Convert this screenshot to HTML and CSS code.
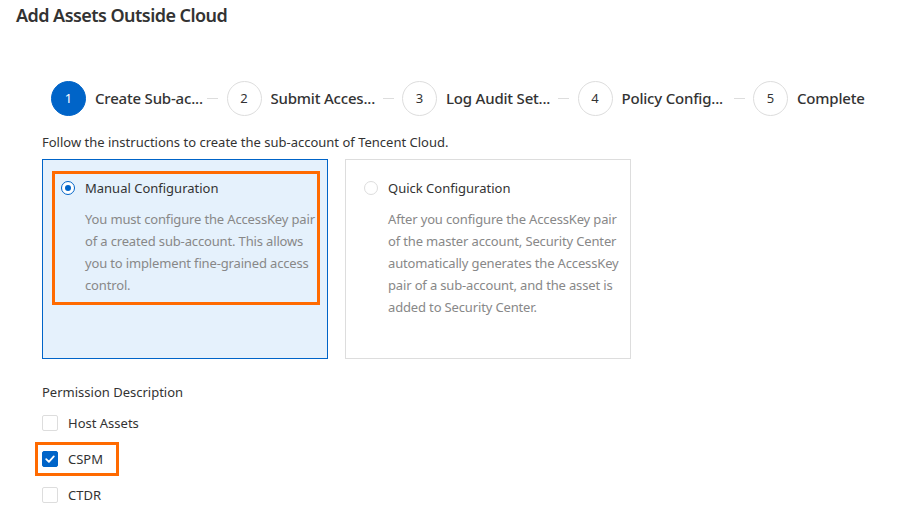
FILE: index.html
```html
<!DOCTYPE html>
<html>
<head>
<meta charset="utf-8">
<link rel="stylesheet" href="styles.css">
</head>
<body>
<div class="page">
  <h1 class="title">Add Assets Outside Cloud</h1>
  <div class="steps">
    <div class="step active"><span class="num">1</span><span class="label">Create Sub-ac...</span><span class="sep"></span></div>
    <div class="step"><span class="num">2</span><span class="label">Submit Acces...</span><span class="sep"></span></div>
    <div class="step"><span class="num">3</span><span class="label">Log Audit Set...</span><span class="sep"></span></div>
    <div class="step"><span class="num">4</span><span class="label">Policy Config...</span><span class="sep"></span></div>
    <div class="step last"><span class="num">5</span><span class="label">Complete</span></div>
  </div>
  <p class="intro">Follow the instructions to create the sub-account of Tencent Cloud.</p>
  <div class="cards">
    <div class="card selected">
      <div class="highlight">
        <div class="opt-head"><span class="radio on"></span><span class="opt-title">Manual Configuration</span></div>
        <p class="opt-desc">You must configure the AccessKey pair of a created sub-account. This allows you to implement fine-grained access control.</p>
      </div>
    </div>
    <div class="card">
      <div class="plain">
        <div class="opt-head"><span class="radio"></span><span class="opt-title">Quick Configuration</span></div>
        <p class="opt-desc">After you configure the AccessKey pair of the master account, Security Center automatically generates the AccessKey pair of a sub-account, and the asset is added to Security Center.</p>
      </div>
    </div>
  </div>
  <div class="perm-title">Permission Description</div>
  <div class="checks">
    <div class="check"><span class="box"></span><span>Host Assets</span></div>
    <div class="check marked"><span class="box on"><svg width="12" height="12" viewBox="0 0 12 12"><path d="M2.2 6.2 L4.9 8.8 L9.8 3.4" fill="none" stroke="#fff" stroke-width="1.8" stroke-linecap="round" stroke-linejoin="round"/></svg></span><span>CSPM</span></div>
    <div class="check"><span class="box"></span><span>CTDR</span></div>
  </div>
</div>
</body>
</html>
```
FILE: styles.css
```css
html, body { margin: 0; padding: 0; background: #fff; }
body { font-family: "Noto Sans", "Open Sans", sans-serif; color: #333; width: 900px; height: 513px; overflow: hidden; }
.page { padding: 3px 0 0 16px; }
.title { margin: 0; font-size: 18px; font-weight: 600; line-height: 24px; color: #333; letter-spacing: -0.55px; }
.steps { display: flex; align-items: center; margin-top: 53px; margin-left: 35px; height: 36px; }
.step { display: flex; align-items: center; flex: 0 0 175.5px; }
.step.last { flex: 0 0 auto; }
.num { width: 33px; height: 33px; border: 1px solid #ddd; border-radius: 50%; display: flex; align-items: center; justify-content: center; font-size: 13px; color: #333; box-sizing: content-box; flex: none; margin-right: 9px; }
.step.active .num { background: #0064c8; border-color: #0064c8; color: #fff; }
.label { font-size: 15px; font-weight: 500; color: #333; letter-spacing: -0.2px; flex: 0 0 112px; white-space: nowrap; overflow: hidden; }
.step.last .label { flex: 0 0 auto; }
.sep { width: 11px; height: 1px; background: #ddd; flex: none; }
.intro { margin: 16px 0 0 26px; font-size: 13px; line-height: 20px; color: #333; }
.cards { display: flex; gap: 17px; margin: 7px 0 0 26px; }
.card { width: 284px; height: 198px; border: 1px solid #ddd; background: #fff; box-sizing: content-box; }
.card.selected { border-color: #0064c8; background: #e5f1fc; }
.highlight { margin: 11px 7px 0 9px; border: 3px solid #ff6a00; padding: 4px 0 6px 6px; }
.plain { margin: 11px 7px 0 9px; border: 3px solid transparent; padding: 4px 0 6px 6px; }
.opt-head { display: flex; align-items: center; gap: 10px; height: 20px; }
.radio { width: 14px; height: 14px; border: 1px solid #ddd; border-radius: 50%; background: #fff; box-sizing: border-box; position: relative; }
.radio.on { border-color: #0064c8; }
.radio.on::after { content: ""; position: absolute; left: 3px; top: 3px; width: 6px; height: 6px; border-radius: 50%; background: #0064c8; }
.opt-title { font-size: 13px; color: #333; }
.opt-desc { margin: 10px -6px 0 24px; font-size: 13px; line-height: 22px; color: #888; letter-spacing: -0.15px; }
.perm-title { margin: 23px 0 0 26px; font-size: 13px; line-height: 20px; color: #333; }
.checks { margin: 4px 0 0 26px; display: flex; flex-direction: column; gap: 2px; align-items: flex-start; }
.check { display: flex; align-items: center; gap: 10px; font-size: 13px; height: 34px; }
.check.marked { margin-left: -7px; padding: 0 13px 0 4px; border: 3px solid #ff6a00; height: 34px; box-sizing: border-box; }
.box { width: 16px; height: 16px; border: 1px solid #ddd; border-radius: 2px; box-sizing: border-box; display: flex; align-items: center; justify-content: center; background: #fff; }
.box.on { background: #0064c8; border-color: #0064c8; }
```
